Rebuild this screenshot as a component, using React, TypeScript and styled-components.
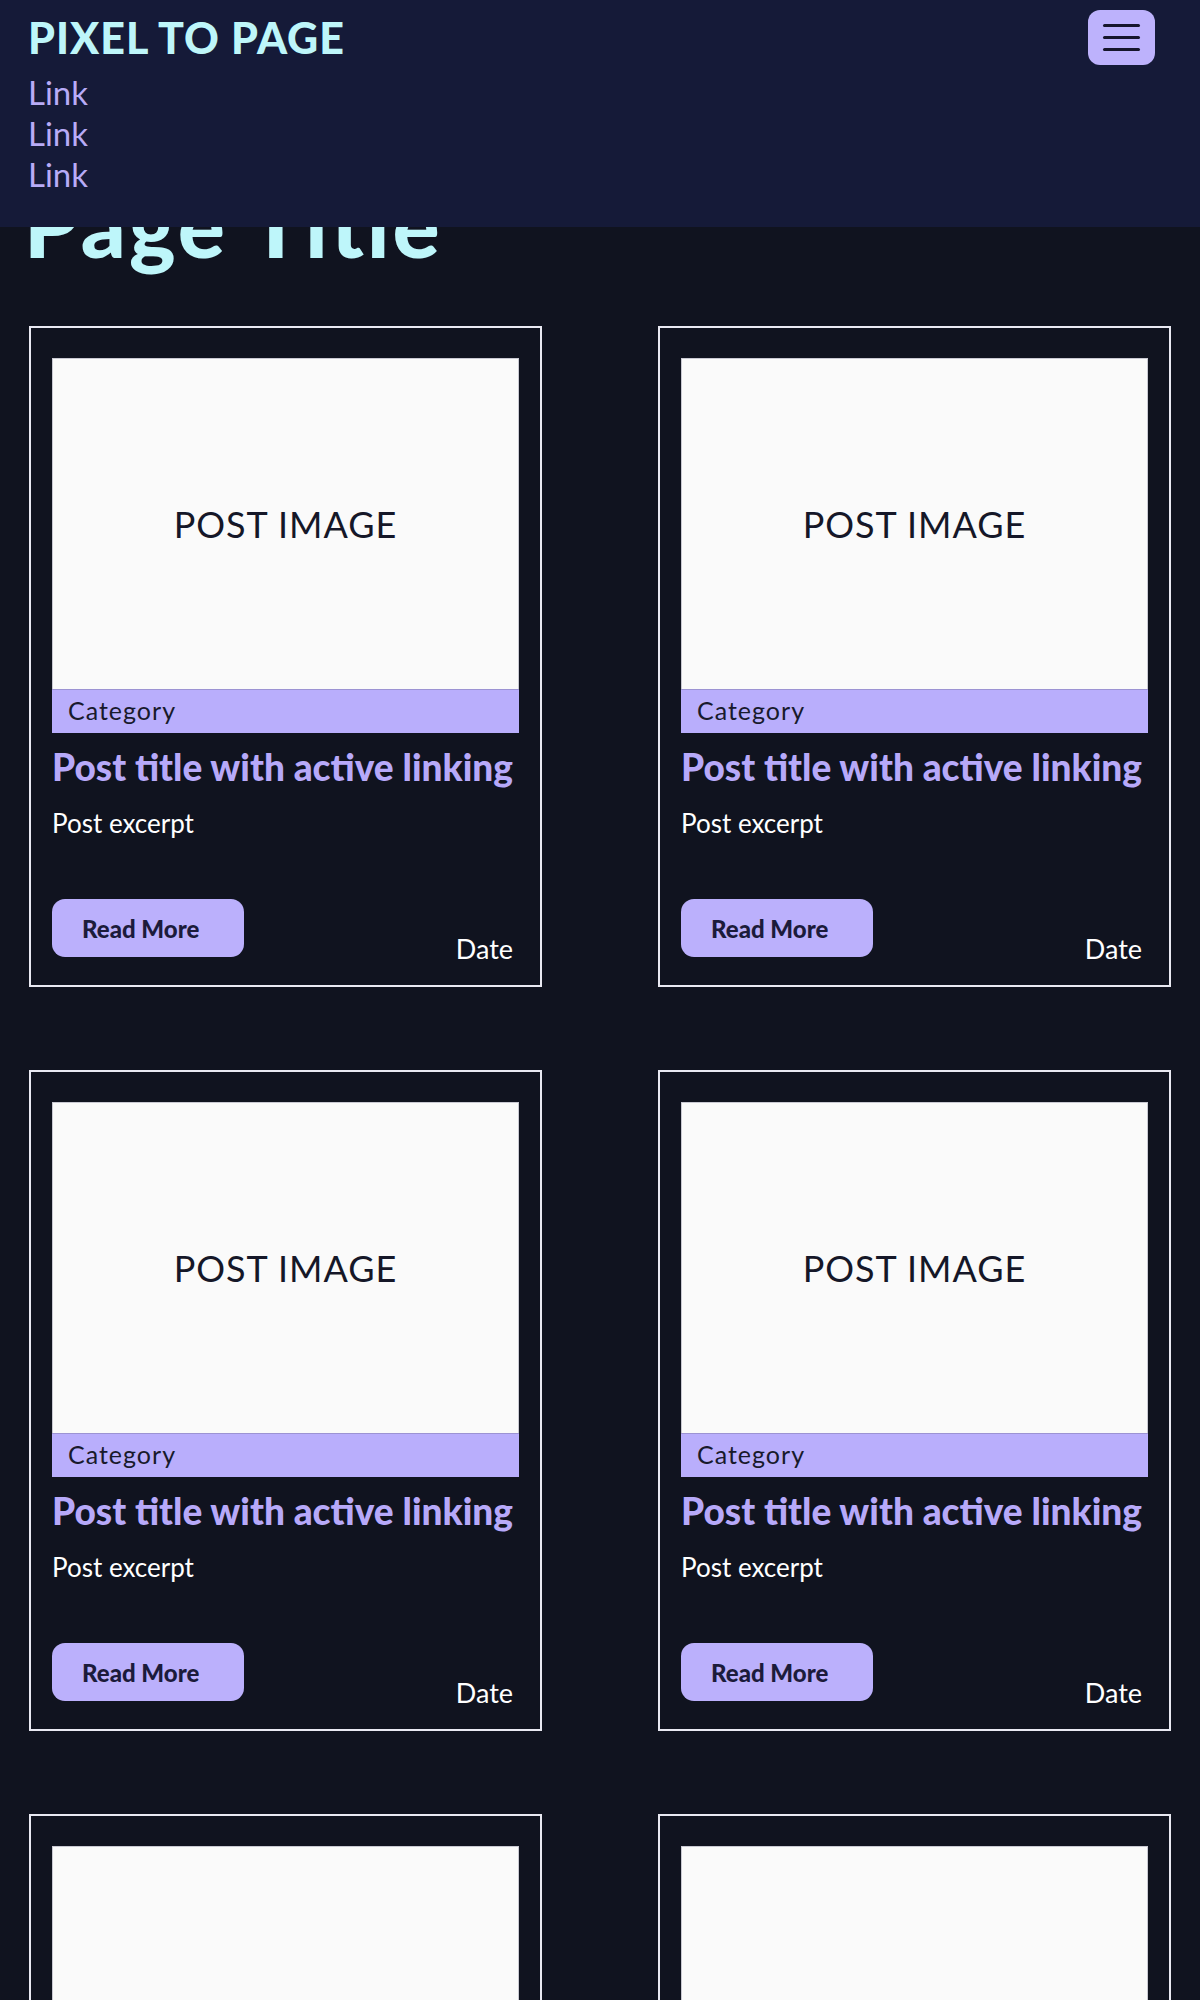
import React from 'react';
import styled, { createGlobalStyle } from 'styled-components';

const GlobalStyle = createGlobalStyle`
  * {
    box-sizing: border-box;
  }
  body {
    margin: 0;
    background: #10131f;
    font-family: 'Lato', 'Noto Sans', sans-serif;
    color: #ffffff;
  }
`;

const Header = styled.header`
  position: fixed;
  top: 0;
  left: 0;
  right: 0;
  z-index: 10;
  height: 227px;
  padding: 10px 45px 0 28px;
  background: #151a38;
  display: flex;
  justify-content: space-between;
  align-items: flex-start;
`;

const Brand = styled.div`
  display: flex;
  flex-direction: column;
`;

const Logo = styled.a`
  margin-top: 3px;
  font-family: 'Lato', sans-serif;
  font-weight: 900;
  font-size: 43px;
  line-height: 50px;
  color: #bef6fa;
  text-decoration: none;
  letter-spacing: 1px;
`;

const NavList = styled.nav`
  margin-top: 9px;
  display: flex;
  flex-direction: column;
`;

const NavLink = styled.a`
  font-size: 33px;
  line-height: 41px;
  color: #b8abf7;
  text-decoration: none;
`;

const MenuButton = styled.button`
  width: 67px;
  height: 55px;
  border: none;
  border-radius: 12px;
  background: #bdb2fc;
  display: flex;
  flex-direction: column;
  align-items: center;
  justify-content: center;
  gap: 9px;
  padding: 0;
  span {
    display: block;
    width: 37px;
    height: 3px;
    border-radius: 2px;
    background: #16152b;
  }
`;

const Main = styled.main`
  padding: 176px 29px 40px;
`;

const PageTitle = styled.h1`
  margin: 0 0 54px -5px;
  font-family: 'Lato', sans-serif;
  font-weight: 900;
  font-size: 88px;
  line-height: 96px;
  letter-spacing: 3px;
  color: #bef6fa;
`;

const Grid = styled.div`
  display: grid;
  grid-template-columns: 1fr 1fr;
  column-gap: 116px;
  row-gap: 83px;
`;

const Card = styled.article`
  border: 2px solid #e9e9f2;
  padding: 30px 21px 28px;
  display: flex;
  flex-direction: column;
`;

const ImageBox = styled.div`
  height: 331px;
  background: #fafafa;
  border: 1px solid #c9c9d2;
  border-bottom: none;
  display: flex;
  align-items: center;
  justify-content: center;
  font-size: 36px;
  letter-spacing: 1px;
  color: #151728;
`;

const CategoryBar = styled.div`
  height: 44px;
  background: #b9aefc;
  border-top: 1px solid #9c93d3;
  padding-left: 16px;
  font-size: 25px;
  line-height: 40px;
  color: #181a2c;
  letter-spacing: 1px;
`;

const PostTitle = styled.a`
  margin-top: 12px;
  font-family: 'Lato', sans-serif;
  font-weight: 900;
  font-size: 37px;
  line-height: 44px;
  color: #b7a9f9;
  text-decoration: none;
  white-space: nowrap;
`;

const Excerpt = styled.p`
  margin: 18px 0 0;
  font-size: 26px;
  line-height: 32px;
  color: #ffffff;
`;

const CardFooter = styled.div`
  margin-top: 60px;
  display: flex;
  justify-content: space-between;
  align-items: flex-end;
`;

const ReadMore = styled.button`
  width: 192px;
  height: 58px;
  border: none;
  border-radius: 13px;
  background: #bbb0fc;
  padding: 0 0 0 30px;
  text-align: left;
  font-family: 'Lato', sans-serif;
  font-weight: 900;
  font-size: 24px;
  color: #1c1b3b;
`;

const DateText = styled.span`
  padding-right: 6px;
  margin-bottom: -2px;
  font-size: 27px;
  line-height: 20px;
  color: #ffffff;
`;

const posts = Array.from({ length: 6 }, (_, i) => ({
  id: i,
  category: 'Category',
  title: 'Post title with active linking',
  excerpt: 'Post excerpt',
  date: 'Date',
}));

export default function App() {
  return (
    <>
      <GlobalStyle />
      <Header>
        <Brand>
          <Logo href="#">PIXEL TO PAGE</Logo>
          <NavList>
            <NavLink href="#">Link</NavLink>
            <NavLink href="#">Link</NavLink>
            <NavLink href="#">Link</NavLink>
          </NavList>
        </Brand>
        <MenuButton aria-label="Menu">
          <span />
          <span />
          <span />
        </MenuButton>
      </Header>
      <Main>
        <PageTitle>Page Title</PageTitle>
        <Grid>
          {posts.map((post) => (
            <Card key={post.id}>
              <ImageBox>POST IMAGE</ImageBox>
              <CategoryBar>{post.category}</CategoryBar>
              <PostTitle href="#">{post.title}</PostTitle>
              <Excerpt>{post.excerpt}</Excerpt>
              <CardFooter>
                <ReadMore>Read More</ReadMore>
                <DateText>{post.date}</DateText>
              </CardFooter>
            </Card>
          ))}
        </Grid>
      </Main>
    </>
  );
}
